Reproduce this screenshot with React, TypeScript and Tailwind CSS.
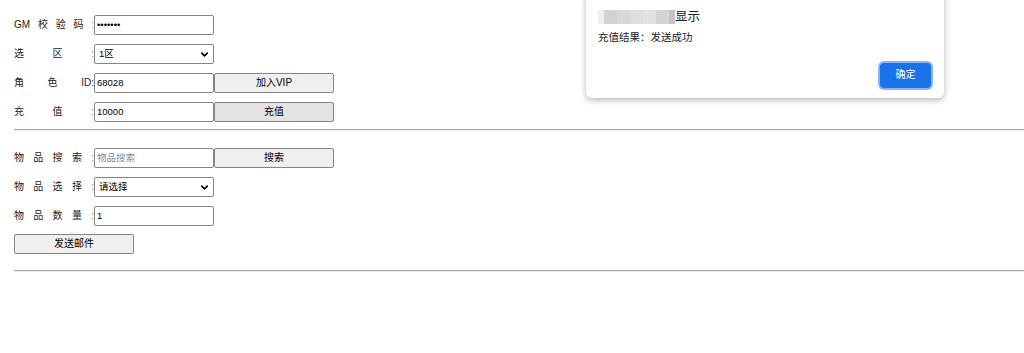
import { ChevronDown } from 'lucide-react';

const font = { fontFamily: '"Liberation Sans", "Noto Sans CJK SC", sans-serif' };

// label laid out like the original spaced-out form labels
const Label = ({ parts }: { parts: string[] }) => (
  <div className="w-[80px] shrink-0 flex justify-between items-center text-[10px] text-[#222] leading-none">
    {parts.map((p, i) => (
      <span key={i} className={i === parts.length - 1 && p === ':' ? 'text-[#777]' : ''}>
        {p}
      </span>
    ))}
  </div>
);

const TextBox = ({ value, placeholder }: { value?: string; placeholder?: string }) => (
  <div className="w-[120px] h-[20px] border border-[#858585] rounded-[2px] bg-white flex items-center px-[2px] text-[9.5px] leading-none">
    {value ? <span className="text-black">{value}</span> : <span className="text-[#8a8a8a]">{placeholder}</span>}
  </div>
);

const SelectBox = ({ value }: { value: string }) => (
  <div className="w-[120px] h-[20px] border border-[#858585] rounded-[2px] bg-white flex items-center justify-between pl-[4px] pr-[3px] text-[9.5px] leading-none text-black">
    <span>{value}</span>
    <ChevronDown className="w-[11px] h-[11px]" strokeWidth={3.5} />
  </div>
);

const Btn = ({ children, active }: { children: React.ReactNode; active?: boolean }) => (
  <div
    className={`w-[120px] h-[20px] border border-[#858585] rounded-[2px] flex items-center justify-center text-[10px] leading-none text-black ${
      active ? 'bg-[#e3e3e3]' : 'bg-[#efefef]'
    }`}
  >
    {children}
  </div>
);

const Row = ({ children }: { children: React.ReactNode }) => (
  <div className="flex items-center h-[20px]">{children}</div>
);

const Rule = () => <div className="h-0 border-t border-[#a8a8a8] border-b border-b-[#ededed]" />;

export default function App() {
  return (
    <div className="relative w-[1024px] h-[353px] bg-white overflow-hidden" style={font}>
      <div className="pl-[14px]">
        {/* GM section */}
        <div className="flex flex-col gap-[9px] pt-[15px]">
          <Row>
            <Label parts={['GM', '校', '验', '码', ':']} />
            <TextBox value="•••••••" />
          </Row>
          <Row>
            <Label parts={['选', '区', ':']} />
            <SelectBox value="1区" />
          </Row>
          <Row>
            <Label parts={['角', '色', 'ID:']} />
            <TextBox value="68028" />
            <Btn>加入VIP</Btn>
          </Row>
          <Row>
            <Label parts={['充', '值', ':']} />
            <TextBox value="10000" />
            <Btn active>充值</Btn>
          </Row>
        </div>
        <div className="mt-[7px]">
          <Rule />
        </div>

        {/* item section */}
        <div className="flex flex-col gap-[9px] pt-[17px]">
          <Row>
            <Label parts={['物', '品', '搜', '索', ':']} />
            <TextBox placeholder="物品搜索" />
            <Btn>搜索</Btn>
          </Row>
          <Row>
            <Label parts={['物', '品', '选', '择', ':']} />
            <SelectBox value="请选择" />
          </Row>
          <Row>
            <Label parts={['物', '品', '数', '量', ':']} />
            <TextBox value="1" />
          </Row>
          <div className="flex items-center h-[20px] -mt-[1px]">
            <Btn>发送邮件</Btn>
          </div>
        </div>
        <div className="mt-[16px]">
          <Rule />
        </div>
      </div>

      {/* alert dialog */}
      <div className="absolute left-[586px] top-[-10px] w-[358px] h-[108px] bg-white rounded-[6px] shadow-[0_2px_6px_rgba(0,0,0,0.3)] px-[12px] pt-[19px]">
        <div className="flex items-center h-[16px]">
          <div className="flex h-[14px]">
            <div className="w-[6px] bg-[#eeeeee]" />
            <div className="w-[13px] bg-[#d2d2d2]" />
            <div className="w-[13px] bg-[#d8d8d8]" />
            <div className="w-[13px] bg-[#dedede]" />
            <div className="w-[13px] bg-[#e2e2e2]" />
            <div className="w-[13px] bg-[#d4d4d4]" />
            <div className="w-[6px] bg-[#c4c4c4]" />
          </div>
          <span className="text-[12.5px] text-[#202124] leading-none">显示</span>
        </div>
        <div className="mt-[7px] text-[10.5px] text-[#202124] leading-none">充值结果：发送成功</div>
        <div className="flex justify-end mt-[20px] pr-[1px]">
          <div className="w-[51px] h-[25px] rounded-[4px] bg-[#1a73e8] ring-[2px] ring-[#8ab4f8] flex items-center justify-center text-white text-[10px] leading-none">
            确定
          </div>
        </div>
      </div>
    </div>
  );
}
